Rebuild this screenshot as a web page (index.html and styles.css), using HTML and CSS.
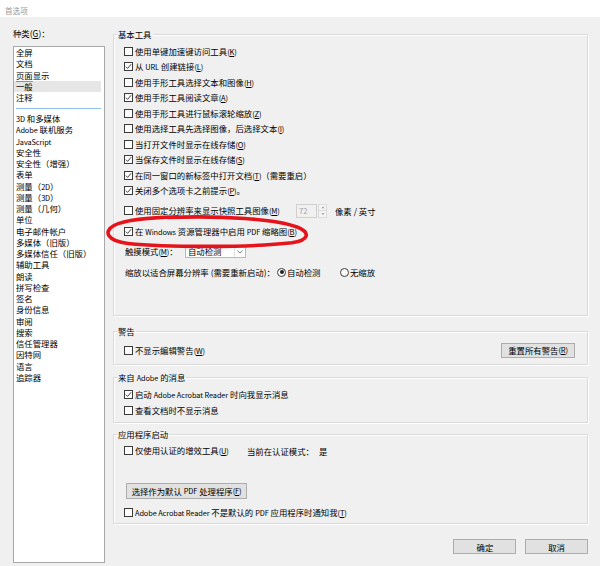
FILE: index.html
```html
<!DOCTYPE html>
<html lang="zh-CN">
<head>
<meta charset="utf-8">
<title>首选项</title>
<link rel="stylesheet" href="styles.css">
</head>
<body>
<div class="titlebar">首选项</div>
<div class="main">
  <div class="sidebar">
    <div class="cat-label">种类(<u>G</u>)：</div>
    <div class="listbox">
      <div class="item">全屏</div>
      <div class="item">文档</div>
      <div class="item"><span class="hover-mark">页面</span>显示</div>
      <div class="item selected">一般</div>
      <div class="item">注释</div>
      <div class="list-sep"></div>
      <div class="item"><span class="en">3D</span> 和多媒体</div>
      <div class="item"><span class="en">Adobe</span> 联机服务</div>
      <div class="item"><span class="en">JavaScript</span></div>
      <div class="item">安全性</div>
      <div class="item">安全性（增强）</div>
      <div class="item">表单</div>
      <div class="item">测量（<span class="en">2D</span>）</div>
      <div class="item">测量（<span class="en">3D</span>）</div>
      <div class="item">测量（几何）</div>
      <div class="item">单位</div>
      <div class="item">电子邮件帐户</div>
      <div class="item">多媒体（旧版）</div>
      <div class="item">多媒体信任（旧版）</div>
      <div class="item">辅助工具</div>
      <div class="item">朗读</div>
      <div class="item">拼写检查</div>
      <div class="item">签名</div>
      <div class="item">身份信息</div>
      <div class="item">审阅</div>
      <div class="item">搜索</div>
      <div class="item">信任管理器</div>
      <div class="item">因特网</div>
      <div class="item">语言</div>
      <div class="item">追踪器</div>
    </div>
  </div>

  <div class="content">
    <fieldset class="group g-basic">
      <legend>基本工具</legend>
      <div class="row r15"><span class="cb"></span><span class="lbl">使用单键加速键访问工具<span class="acc">(<u>K</u>)</span></span></div>
      <div class="row r15"><span class="cb on"><svg viewBox="0 0 7 7"><polyline points="0.8,3.6 2.6,5.4 6.2,1.2"/></svg></span><span class="lbl">从 <span class="en">URL</span> 创建链接<span class="acc">(<u>L</u>)</span></span></div>
      <div class="row r15"><span class="cb"></span><span class="lbl">使用手形工具选择文本和图像<span class="acc">(<u>H</u>)</span></span></div>
      <div class="row r15"><span class="cb on"><svg viewBox="0 0 7 7"><polyline points="0.8,3.6 2.6,5.4 6.2,1.2"/></svg></span><span class="lbl">使用手形工具阅读文章<span class="acc">(<u>A</u>)</span></span></div>
      <div class="row r15"><span class="cb"></span><span class="lbl">使用手形工具进行鼠标滚轮缩放<span class="acc">(<u>Z</u>)</span></span></div>
      <div class="row r15"><span class="cb"></span><span class="lbl">使用选择工具先选择图像，后选择文本<span class="acc">(<u>I</u>)</span></span></div>
      <div class="row r15"><span class="cb"></span><span class="lbl">当打开文件时显示在线存储<span class="acc">(<u>O</u>)</span></span></div>
      <div class="row r15"><span class="cb on"><svg viewBox="0 0 7 7"><polyline points="0.8,3.6 2.6,5.4 6.2,1.2"/></svg></span><span class="lbl">当保存文件时显示在线存储<span class="acc">(<u>S</u>)</span></span></div>
      <div class="row r15"><span class="cb on"><svg viewBox="0 0 7 7"><polyline points="0.8,3.6 2.6,5.4 6.2,1.2"/></svg></span><span class="lbl">在同一窗口的新标签中打开文档<span class="acc">(<u>T</u>)</span>（需要重启）</span></div>
      <div class="row r15"><span class="cb on"><svg viewBox="0 0 7 7"><polyline points="0.8,3.6 2.6,5.4 6.2,1.2"/></svg></span><span class="lbl">关闭多个选项卡之前提示<span class="acc">(<u>P</u>)</span>。</span></div>

      <div class="row r20 first-wide">
        <div class="snap-label"><span class="cb"></span><span class="lbl">使用固定分辨率来显示快照工具图像<span class="acc">(<u>M</u>)</span></span></div>
        <div class="spin-input">72</div>
        <div class="spinner">
          <span class="spin-btn"><svg viewBox="0 0 5 3"><polygon points="0.5,2.8 2.5,0.6 4.5,2.8"/></svg></span>
          <span class="spin-btn"><svg viewBox="0 0 5 3"><polygon points="0.5,0.2 2.5,2.4 4.5,0.2"/></svg></span>
        </div>
        <span class="unit">像素 / 英寸</span>
      </div>
      <div class="row r20"><span class="cb on"><svg viewBox="0 0 7 7"><polyline points="0.8,3.6 2.6,5.4 6.2,1.2"/></svg></span><span class="lbl">在 <span class="en">Windows</span> 资源管理器中启用 <span class="en">PDF</span> 缩略图<span class="acc">(<u>B</u>)</span></span></div>
      <div class="row r20">
        <span class="touch-label">触摸模式<span class="acc">(<u>M</u>)</span>：</span>
        <div class="dropdown"><span class="dd-text">自动检测</span><span class="dd-arrow"><svg viewBox="0 0 7 4"><polyline points="0.5,0.5 3.5,3.3 6.5,0.5"/></svg></span></div>
      </div>
      <div class="row r20">
        <span class="scale-label">缩放以适合屏幕分辨率 (需要重新启动)：</span>
        <span class="radio-opt opt-auto"><span class="radio on"></span><span class="lbl">自动检测</span></span>
        <span class="radio-opt"><span class="radio"></span><span class="lbl">无缩放</span></span>
      </div>
    </fieldset>

    <fieldset class="group g-warn">
      <legend>警告</legend>
      <div class="row warn-row">
        <span class="cb"></span><span class="lbl">不显示编辑警告<span class="acc">(<u>W</u>)</span></span>
        <button class="btn btn-reset" type="button">重置所有警告<span class="acc">(<u>R</u>)</span></button>
      </div>
    </fieldset>

    <fieldset class="group g-adobe">
      <legend>来自 <span class="en">Adobe</span> 的消息</legend>
      <div class="row r16"><span class="cb on"><svg viewBox="0 0 7 7"><polyline points="0.8,3.6 2.6,5.4 6.2,1.2"/></svg></span><span class="lbl">启动 <span class="en">Adobe Acrobat Reader</span> 时向我显示消息</span></div>
      <div class="row r16"><span class="cb"></span><span class="lbl">查看文档时不显示消息</span></div>
    </fieldset>

    <fieldset class="group g-start">
      <legend>应用程序启动</legend>
      <div class="row r16">
        <div class="cert-label"><span class="cb"></span><span class="lbl">仅使用认证的增效工具<span class="acc">(<u>U</u>)</span></span></div>
        <span class="mode-label">当前在认证模式：</span>
        <span class="lbl">是</span>
      </div>
      <button class="btn btn-default" type="button">选择作为默认 <span class="en">PDF</span> 处理程序<span class="acc">(<u>F</u>)</span></button>
      <div class="row r16 notify-row"><span class="cb"></span><span class="lbl"><span class="en">Adobe Acrobat Reader</span> 不是默认的 <span class="en">PDF</span> 应用程序时通知我<span class="acc">(<u>T</u>)</span></span></div>
    </fieldset>

    <div class="footer">
      <button class="btn btn-footer" type="button">确定</button>
      <button class="btn btn-footer" type="button">取消</button>
    </div>
  </div>
</div>

<svg class="annotation" width="600" height="566" viewBox="0 0 600 566">
  <path d="M 168 217.5 C 222 215.5, 276 219, 297 227 C 311 232.5, 309 240.5, 292 242.8 C 250 247.5, 168 247.5, 128 243.5 C 107 241, 103 231.5, 114 225.5 C 125 219.5, 148 217.8, 178 216.8"/>
</svg>
</body>
</html>
```

FILE: styles.css
```css
* {
  box-sizing: border-box;
}

html, body {
  margin: 0;
  padding: 0;
}

body {
  position: relative;
  width: 600px;
  height: 566px;
  overflow: hidden;
  background: #f0f0f0;
  font-family: "Noto Sans CJK SC", "Noto Sans", sans-serif;
  font-size: 8.4px;
  color: #000000;
}

u {
  text-decoration: underline;
  text-underline-offset: 1px;
}

.en {
  font-size: 0.88em;
  letter-spacing: -0.1px;
}

.acc {
  font-size: 0.9em;
  letter-spacing: -0.2px;
}

.titlebar {
  height: 17px;
  background: #ffffff;
  color: #9a9a9a;
  font-size: 7.6px;
  line-height: 13px;
  padding: 4px 0 0 5px;
}

.main {
  display: flex;
  padding: 10px 0 0 13px;
  height: 549px;
}

/* ---------- left category list ---------- */
.sidebar {
  width: 92px;
  display: flex;
  flex-direction: column;
}

.cat-label {
  line-height: 12px;
  height: 12px;
  margin-bottom: 7px;
}

.listbox {
  height: 517px;
  background: #ffffff;
  border: 1px solid #a8a8a8;
  padding-top: 0;
}

.item {
  height: 11.25px;
  line-height: 11.25px;
  padding-left: 2px;
  margin-right: 3px;
  white-space: nowrap;
}

.item.selected {
  background: #e6e6e6;
}

.hover-mark {
  text-decoration: underline;
  text-decoration-color: #4f9fe6;
  text-underline-offset: 1.5px;
}

.list-sep {
  height: 9.75px;
  display: flex;
  align-items: center;
  padding: 0 3px 0 2px;
}

.list-sep::after {
  content: "";
  display: block;
  width: 100%;
  height: 1px;
  background: #8fc2ee;
}

/* ---------- right content ---------- */
.content {
  width: 475px;
  margin-left: 8px;
  margin-top: 1px;
  display: flex;
  flex-direction: column;
}

.group {
  margin: 0;
  padding: 0 12px 0 10px;
  border: 1px solid #dadada;
  box-shadow: 1px 1px 0 #ffffff, inset 1px 1px 0 #ffffff;
  min-width: 0;
}

.group legend {
  margin-left: -7px;
  padding: 0 1px;
  line-height: 12px;
  height: 12px;
}

.g-basic {
  padding-top: 3.5px;
  padding-bottom: 32.5px;
}

.g-warn {
  margin-top: 9px;
  padding-top: 3px;
  padding-bottom: 4px;
}

.g-adobe {
  margin-top: 6px;
  padding-top: 3px;
  padding-bottom: 3.5px;
}

.g-start {
  margin-top: 5.5px;
  padding-top: 2.7px;
  padding-bottom: 3.2px;
}

.row {
  display: flex;
  align-items: center;
  white-space: nowrap;
  line-height: 12px;
}

.r15 { height: 15.5px; }
.r16 { height: 16px; }
.r20 { height: 20.5px; }

.first-wide {
  margin-top: 2px;
}

.lbl {
  line-height: 12px;
}

/* checkbox */
.cb {
  flex: none;
  width: 9px;
  height: 9px;
  border: 1px solid #3a3a3a;
  background: #ffffff;
  margin-right: 2px;
  display: flex;
  align-items: center;
  justify-content: center;
}

.cb svg {
  width: 7px;
  height: 7px;
  display: block;
}

.cb svg polyline {
  fill: none;
  stroke: #2a2a2a;
  stroke-width: 0.9;
}

/* snapshot resolution row */
.snap-label {
  width: 172px;
  display: flex;
  align-items: center;
}

.spin-input {
  width: 21px;
  height: 14px;
  border: 1px solid #cfcfcf;
  background: #f0f0f0;
  color: #a3a3a3;
  line-height: 12px;
  padding-left: 2px;
  font-size: 7.6px;
}

.spinner {
  width: 9px;
  height: 14px;
  margin-left: 1px;
  display: flex;
  flex-direction: column;
}

.spin-btn {
  flex: 1;
  border: 1px solid #dadada;
  background: #f4f4f4;
  display: flex;
  align-items: center;
  justify-content: center;
}

.spin-btn + .spin-btn {
  border-top: none;
}

.spin-btn svg {
  width: 4px;
  height: 2.5px;
  display: block;
}

.spin-btn polygon {
  fill: #9a9a9a;
}

.unit {
  margin-left: 8px;
}

/* touch mode */
.touch-label {
  width: 60px;
  margin-left: 1px;
}

.dropdown {
  width: 61px;
  height: 13px;
  background: #ffffff;
  border: 1px solid #b9b9b9;
  display: flex;
  align-items: center;
}

.dd-text {
  flex: 1;
  padding-left: 2px;
  line-height: 11px;
}

.dd-arrow {
  width: 11px;
  height: 11px;
  border-left: 1px solid #e2e2e2;
  display: flex;
  align-items: center;
  justify-content: center;
}

.dd-arrow svg {
  width: 6px;
  height: 4px;
  display: block;
}

.dd-arrow polyline {
  fill: none;
  stroke: #555555;
  stroke-width: 0.9;
}

/* scale row */
.scale-label {
  width: 152px;
  margin-left: 1px;
}

.radio-opt {
  display: flex;
  align-items: center;
}

.opt-auto {
  width: 63px;
}

.radio {
  width: 9px;
  height: 9px;
  border: 1px solid #3a3a3a;
  border-radius: 50%;
  background: #ffffff;
  margin-right: 1px;
  display: flex;
  align-items: center;
  justify-content: center;
}

.radio.on::after {
  content: "";
  width: 4px;
  height: 4px;
  border-radius: 50%;
  background: #222222;
}

/* buttons */
.btn {
  font-family: inherit;
  font-size: 8.4px;
  color: #000000;
  background: #e1e1e1;
  border: 1px solid #adadad;
  border-radius: 0;
  padding: 0;
  margin: 0;
  line-height: 12px;
  display: flex;
  align-items: center;
  justify-content: center;
  white-space: pre;
}

.warn-row {
  height: 20px;
}

.btn-reset {
  margin-left: auto;
  width: 74px;
  height: 15px;
}

.cert-label {
  width: 123px;
  display: flex;
  align-items: center;
}

.mode-label {
  width: 72px;
}

.btn-default {
  margin-top: 24.6px;
  margin-left: 2px;
  width: 121px;
  height: 16px;
}

.notify-row {
  margin-top: 5px;
}

.footer {
  display: flex;
  justify-content: flex-end;
  gap: 8.6px;
  margin-top: 14.8px;
}

.btn-footer {
  width: 63px;
  height: 15px;
}

/* hand-drawn red annotation */
.annotation {
  position: absolute;
  left: 0;
  top: 0;
  pointer-events: none;
}

.annotation path {
  fill: none;
  stroke: #e5131b;
  stroke-width: 3.6;
  stroke-linecap: round;
  stroke-linejoin: round;
}
```
